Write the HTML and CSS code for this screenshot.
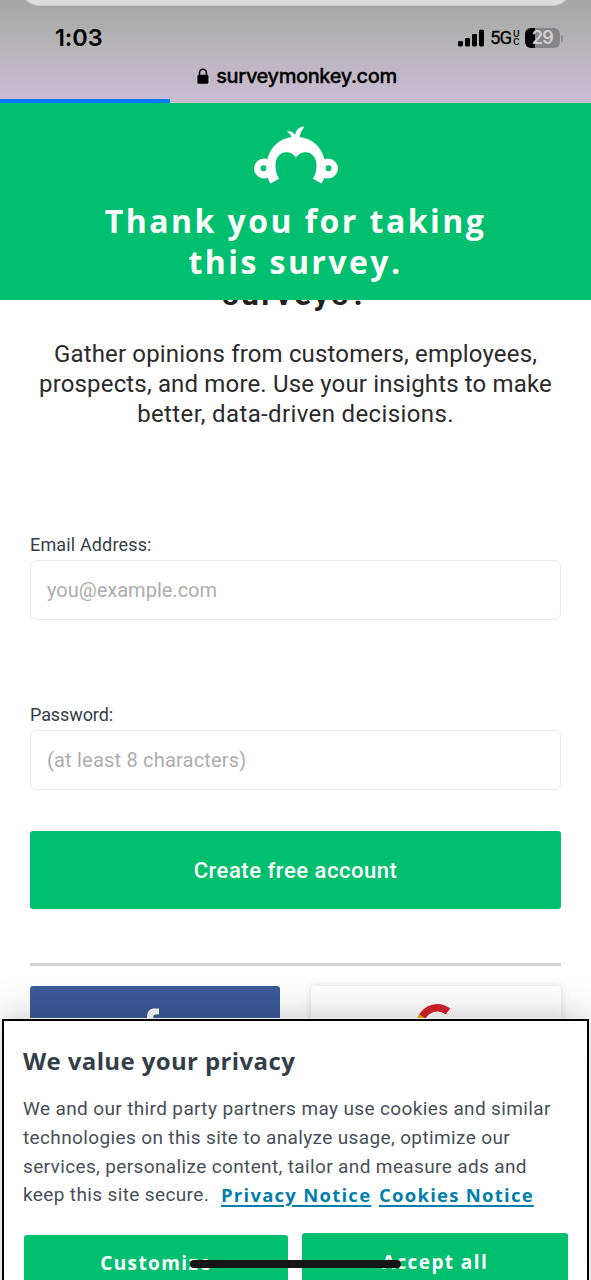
FILE: index.html
```
<!DOCTYPE html>
<html lang="en">
<head>
<meta charset="utf-8">
<title>SurveyMonkey</title>
<link rel="stylesheet" href="styles.css">
</head>
<body>
<div class="screen">
  <div class="browser-bar">
    <div class="sheet"></div>
    <div class="status">
      <span class="time">1:03</span>
      <div class="indicators">
        <svg class="signal" width="27" height="18" viewBox="0 0 27 18">
          <rect x="0" y="12" width="5" height="5.5" rx="1.4"/><rect x="7" y="9" width="5" height="8.5" rx="1.4"/><rect x="14" y="5" width="5" height="12.5" rx="1.4"/><rect x="21" y="0.8" width="5" height="16.7" rx="1.4"/>
        </svg>
        <span class="network">5G</span>
        <span class="uc"><span>U</span><span>C</span></span>
        <div class="battery"><span>29</span></div>
        <div class="battery-cap"></div>
      </div>
    </div>
    <div class="address">
      <svg width="12" height="16" viewBox="0 0 12 16"><path d="M2.5 8V4.6a3.4 3.4 0 0 1 6.9 0V8" fill="none" stroke="#000" stroke-width="1.5"/><rect x="0.4" y="6.8" width="11" height="9" rx="1.6"/></svg>
      <span>surveymonkey.com</span>
    </div>
    <div class="progress"></div>
  </div>

  <header class="hero">
    <svg class="logo" width="84" height="60" viewBox="0 0 84 60">
      <path fill="#fff" d="M16.500 57.500C14 54 12.500 49 12.500 42C12.500 24 24 12.500 37.500 11.300C37.500 9 35.500 7.500 33 5.500C36.500 4.500 39.500 6.500 41.200 9C42 4 45 1 49.800 0.500C50 3 45.800 6 45.800 11.300C60 12.500 71.500 24 71.500 42C71.500 49 70 54 67.500 57.500L58.700 52.500C61.500 49 62.500 44 62.500 39.500C62.500 31 57.500 26.300 51.500 26.300C47 26.300 43.500 29 42 32C40.500 29 37 26.300 32.500 26.300C26.500 26.300 21.500 31 21.500 39.500C21.500 44 22.500 49 25.300 52.500Z"/>
      <path fill="#fff" fill-rule="evenodd" d="M10 32.500a10 10 0 1 0 0 20c4 0 6-1 7-3V36c-2-2-4-3.500-7-3.500M9.500 39.300a3 3 0 1 1 0 6a3 3 0 1 1 0-6M74 32.500a10 10 0 1 1 0 20c-4 0-6-1-7-3V36c2-2 4-3.500 7-3.500M74.500 39.300a3 3 0 1 0 0 6a3 3 0 1 0 0-6"/>
    </svg>
    <h1><span class="t1">Thank you for taking</span><span class="t2">this survey.</span></h1>
  </header>

  <main>
    <div class="heading-clip"><h2>surveys?</h2></div>
    <p class="intro"><span class="i1">Gather opinions from customers, employees,</span><span class="i2">prospects, and more. Use your insights to make</span><span class="i3">better, data-driven decisions.</span></p>
    <div class="field email"><label>Email Address:</label><div class="input"><span class="ph1">you@example.com</span></div></div>
    <div class="field password"><label>Password:</label><div class="input"><span class="ph2">(at least 8 characters)</span></div></div>
    <div class="create"><span>Create free account</span></div>
    <div class="divider"></div>
    <div class="social">
      <div class="facebook"><svg width="30" height="50" viewBox="0 0 30 50"><path d="M7 50V15c0-6 3-8.500 8-8.500h4v6H16c-2 0-2.700 1-2.700 3V50z" fill="#fff"/></svg></div>
      <div class="google"><svg width="42" height="42" viewBox="0 0 42 42" fill="none" stroke-width="7.500"><path d="M6.500 15.500A17 17 0 0 1 33 8.500" stroke="#d8232a"/><path d="M4 22A17 17 0 0 1 7.500 13.500" stroke="#f4b400"/></svg></div>
    </div>
  </main>

  <section class="privacy">
    <h3>We value your privacy</h3>
    <p><span class="p1">We and our third party partners may use cookies and similar</span><span class="p2">technologies on this site to analyze usage, optimize our</span><span class="p3">services, personalize content, tailor and measure ads and</span><span class="p4"><span class="keep">keep this site secure.</span><a class="a1"><span>Privacy Notice</span></a><a class="a2">Cookies Notice</a></span></p>
    <div class="actions"><div class="btn customize"><span>Customize</span></div><div class="btn accept"><span>Accept all</span></div></div>
  </section>
  <div class="home-bar"></div>
</div>
</body>
</html>
```
FILE: styles.css
```
* { box-sizing: border-box; }
body { margin: 0; background: #fff; font-family: Roboto, sans-serif; }
.screen { position: relative; width: 591px; height: 1280px; overflow: hidden; display: flex; flex-direction: column; }
h1, h2, h3, p { margin: 0; }
svg { display: block; }
span, a { white-space: nowrap; }

.browser-bar { position: relative; height: 103px; flex: none; background: linear-gradient(#a6a7a6 6px, #b6b4b7 45px, #c9bcd1 95px, #cabdd2); font-family: Inter, sans-serif; color: #000; overflow: hidden; }
.sheet { position: absolute; left: 20px; top: -34px; width: 552px; height: 40px; border-radius: 30px; background: #dcdcdd; border-bottom: 1px solid #c8c8c8; }
.status { display: flex; justify-content: space-between; height: 52px; padding: 24px 28px 0 55px; }
.time { font-size: 23.5px; line-height: 28px; font-weight: 600; letter-spacing: -0.1px; }
.indicators { display: flex; height: 28px; align-items: center; }
.signal { margin-right: 5px; }
.network { font-family: Roboto, sans-serif; font-size: 18.5px; font-weight: 400; -webkit-text-stroke: 0.3px #000; letter-spacing: -0.8px; width: 22px; }
.uc { display: flex; flex-direction: column; font-size: 9px; line-height: 8px; font-weight: 600; width: 13px; padding-left: 1px; }
.battery { width: 35px; height: 20px; border-radius: 6px; background: linear-gradient(90deg, #000 10px, #858487 10px); color: #cfcdd0; font-size: 18px; line-height: 20px; font-weight: 600; text-align: center; letter-spacing: -0.5px; }
.battery-cap { width: 2px; height: 7px; margin-left: 1px; border-radius: 0 3px 3px 0; background: #929094; }
.address { display: flex; justify-content: center; gap: 7px; align-items: center; height: 24px; margin-top: 12px; padding-left: 3px; font-size: 20px; font-weight: 500; -webkit-text-stroke: 0.3px #000; letter-spacing: -0.4px; }
.progress { position: absolute; left: 0; bottom: 0; width: 170px; height: 4px; background: #007aff; }

.hero { position: relative; z-index: 1; height: 197px; flex: none; background: #00bf6f; display: flex; flex-direction: column; align-items: center; padding-top: 23px; color: #fff; }
.hero h1 { font-family: "Open Sans", sans-serif; display: flex; flex-direction: column; align-items: center; margin-top: 14px; font-size: 32px; line-height: 41px; font-weight: 700; }
.t1, .t2 { letter-spacing: 2.45px; }

main { padding: 0 30px; color: #222; }
.heading-clip { height: 38px; display: flex; justify-content: center; align-items: flex-start; }
.heading-clip h2 { margin-top: -26px; font-size: 32px; line-height: 41px; color: #231f20; letter-spacing: 2.3px; }
.intro { display: flex; flex-direction: column; align-items: center; padding-top: 1px; font-size: 24px; line-height: 30px; color: #2b292b; }
.i1, .i2 { letter-spacing: 0.16px; }
.i3 { letter-spacing: 0.37px; }
.field label { display: block; padding-top: 1px; font-size: 18px; line-height: 24px; height: 28px; color: #333e48; }
.email { margin-top: 103px; }
.email label { letter-spacing: 0.15px; }
.password { margin-top: 82px; }
.password label { letter-spacing: -0.1px; }
.input { height: 60px; border: 1.5px solid #eaeaea; border-radius: 7px; padding: 0 16px; display: flex; align-items: center; font-size: 20px; color: #adadad; }
.ph2 { letter-spacing: 0.2px; }
.create { height: 78px; margin-top: 41px; background: #00bf6f; border-radius: 3px; display: flex; align-items: center; justify-content: center; color: #fff; font-size: 22px; font-weight: 500; letter-spacing: 0.53px; }
.divider { height: 3px; margin-top: 54px; background: #d0d2d3; }
.social { display: flex; justify-content: space-between; margin-top: 20px; }
.facebook, .google { width: 250px; height: 80px; border-radius: 3px; display: flex; justify-content: center; padding-top: 17px; }
.facebook { background: #3c5a99; padding-top: 16px; }
.google { background: #fff; box-shadow: 0 0 10px rgba(0,0,0,.13); }

.privacy { position: absolute; left: 2px; top: 1019px; width: 587px; height: 280px; background: #fff; border: 2px solid #000; outline: 1px solid #eee; box-shadow: 0 0 38px rgba(0,0,0,.25); padding: 22px 19px 0 19px; color: #333e48; }
.privacy h3 { font-family: "Open Sans", sans-serif; font-size: 24px; line-height: 36px; font-weight: 700; letter-spacing: 0.38px; }
.privacy p { display: flex; flex-direction: column; align-items: flex-start; margin-top: 16px; font-size: 19px; line-height: 28.8px; color: #464f58; letter-spacing: 0.37px; }
.p4 { display: flex; }
.keep { width: 198px; }
.privacy a { font-family: "Open Sans", sans-serif; font-size: 18.5px; line-height: 28px; letter-spacing: 1.25px; color: #007faa; font-weight: 700; text-decoration: underline; text-decoration-thickness: 2px; text-underline-offset: 3px; }
.a1 { width: 158px; }
.actions { display: flex; gap: 14px; align-items: flex-start; margin: 23px 0 0 1px; }
.btn { font-family: "Open Sans", sans-serif; height: 60px; border-radius: 3px; background: #00bf6f; color: #fff; font-size: 19px; font-weight: 700; line-height: 58px; text-align: center; letter-spacing: 1.4px; }
.customize { width: 264px; margin-top: 2px; line-height: 56px; }
.accept { width: 266px; }
.home-bar { position: absolute; left: 190px; top: 1260px; width: 211px; height: 8px; border-radius: 4px; background: #151515; }
```
